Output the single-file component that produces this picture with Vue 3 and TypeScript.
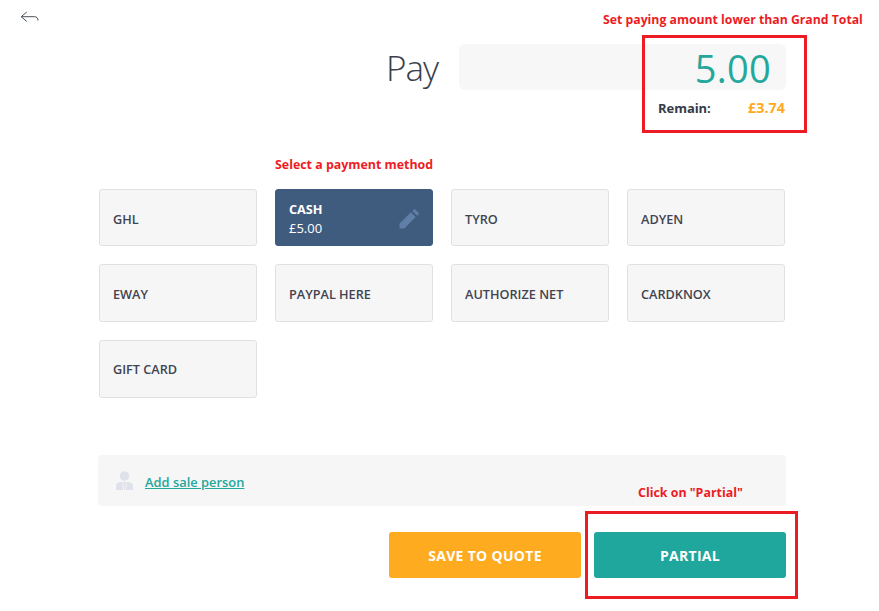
<template>
  <div class="page">
    <button class="back" type="button" aria-label="Back">
      <svg width="19" height="14" viewBox="0 0 19 14" fill="none" stroke="#4a5058" stroke-width="1">
        <path d="M6.8 2 1.2 6.7 6.8 11.5" />
        <path d="M1.2 6.7H14.5C16.6 6.7 18 8 18 10.5" />
      </svg>
    </button>

    <header class="pay-row">
      <h1 class="pay-title">Pay</h1>
      <div class="pay-side">
        <div class="pay-input">5.00</div>
        <div class="remain">
          <span class="remain-label">Remain:</span>
          <span class="remain-value">£3.74</span>
        </div>
      </div>
    </header>

    <section class="methods">
      <button
        v-for="method in methods"
        :key="method.name"
        class="method"
        :class="{ 'method--active': method.amount }"
        type="button"
      >
        <span class="method-name">{{ method.name }}</span>
        <span v-if="method.amount" class="method-amount">{{ method.amount }}</span>
        <svg v-if="method.amount" class="method-edit" width="20" height="20" viewBox="0 0 21 21" fill="#5f7fa6">
          <path d="M0.5 15.5 12.5 3.5 17.5 8.5 5.5 20.5H0.5Z" />
          <path d="M14 2 15.6 0.4C16 0 16.6 0 17 0.4L20.6 4C21 4.4 21 5 20.6 5.4L19 7Z" />
        </svg>
      </button>
    </section>

    <div class="sale-person">
      <svg width="17" height="19" viewBox="0 0 17 19">
        <circle cx="8.5" cy="5" r="4.8" fill="#dfe2ea" />
        <path d="M0 19V14.5C0 12.3 2.6 11 6 11H11C14.4 11 17 12.3 17 14.5V19Z" fill="#dfe2ea" />
        <path d="M6.6 11.5 7.6 19M10.4 11.5 9.4 19" stroke="#f6f6f6" stroke-width="0.8" fill="none" />
      </svg>
      <a class="sale-link" href="#">Add sale person</a>
    </div>

    <footer class="actions">
      <button class="action action--quote" type="button">SAVE TO QUOTE</button>
      <button class="action action--partial" type="button">PARTIAL</button>
    </footer>

    <span class="note note--amount">Set paying amount lower than Grand Total</span>
    <span class="note note--method">Select a payment method</span>
    <span class="note note--partial">Click on "Partial"</span>
    <div class="mark mark--amount"></div>
    <div class="mark mark--partial"></div>
  </div>
</template>

<script setup lang="ts">
type PaymentMethod = {
  name: string;
  amount?: string;
};

const methods: PaymentMethod[] = [
  { name: 'GHL' },
  { name: 'CASH', amount: '£5.00' },
  { name: 'TYRO' },
  { name: 'ADYEN' },
  { name: 'EWAY' },
  { name: 'PAYPAL HERE' },
  { name: 'AUTHORIZE NET' },
  { name: 'CARDKNOX' },
  { name: 'GIFT CARD' },
];
</script>

<style>
html,
body {
  background: #fff;
}
</style>

<style scoped>
.page {
  position: relative;
  width: 879px;
  height: 611px;
  overflow: hidden;
  box-sizing: border-box;
  padding: 44px 93px 0 99px;
  background: #fff;
  font-family: 'Open Sans', 'Liberation Sans', sans-serif;
  color: #3a3f4a;
}

.back {
  position: absolute;
  left: 20px;
  top: 10px;
  padding: 0;
  border: 0;
  background: none;
  line-height: 0;
}

.pay-row {
  display: flex;
  justify-content: flex-end;
  gap: 21px;
  height: 145px;
}

.pay-title {
  margin: 0;
  font-size: 35px;
  font-weight: 300;
  line-height: 48px;
  letter-spacing: -1px;
  color: #39404a;
}

.pay-side {
  width: 327px;
}

.pay-input {
  height: 46px;
  padding-right: 15px;
  border-radius: 6px;
  background: #f7f7f7;
  text-align: right;
  font-size: 38px;
  line-height: 48px;
  letter-spacing: 0.3px;
  color: #25a79b;
}

.remain {
  display: flex;
  justify-content: space-between;
  align-items: center;
  margin-top: 8px;
  padding: 0 1px 0 199px;
  font-size: 13px;
  font-weight: 700;
  line-height: 20px;
}

.remain-label {
  color: #343a46;
  letter-spacing: -0.05px;
}

.remain-value {
  color: #ffa922;
  font-size: 14.4px;
}

.methods {
  display: grid;
  grid-template-columns: repeat(4, 158px);
  grid-template-rows: 57px 58px 58px;
  gap: 18px;
  height: 266px;
}

.method {
  position: relative;
  display: flex;
  flex-direction: column;
  justify-content: center;
  align-items: flex-start;
  padding: 3px 13px 0;
  border: 1px solid #e1e1e1;
  border-radius: 3px;
  background: #f6f6f6;
  font-family: inherit;
  font-size: 12.7px;
  font-weight: 600;
  line-height: 19px;
  color: #3f4450;
}

.method:last-child {
  padding-top: 0;
}

.method--active {
  border-color: #3f5b7e;
  background: #3f5b7e;
  color: #fff;
}

.method--active .method-name {
  font-weight: 700;
}

.method-amount {
  font-size: 13px;
  font-weight: 400;
}

.method-edit {
  position: absolute;
  right: 13px;
  top: 19px;
}

.sale-person {
  display: flex;
  align-items: center;
  gap: 12px;
  width: 688px;
  height: 51px;
  margin-left: -1px;
  padding-left: 18px;
  box-sizing: border-box;
  border-radius: 4px;
  background: #f6f6f6;
}

.sale-link {
  font-size: 12.9px;
  font-weight: 600;
  line-height: 21px;
  padding-top: 4px;
  color: #25a79b;
  text-decoration: underline;
}

.actions {
  display: flex;
  justify-content: flex-end;
  gap: 13px;
  margin-top: 26px;
}

.action {
  width: 192px;
  height: 46px;
  border: 0;
  border-radius: 3px;
  font-family: inherit;
  font-size: 14px;
  font-weight: 700;
  letter-spacing: 0.3px;
  color: #fff;
}

.action--quote {
  background: #ffab20;
}

.action--partial {
  background: #1fa79d;
}

.note {
  position: absolute;
  font-size: 12.25px;
  font-weight: 700;
  line-height: 16px;
  white-space: nowrap;
  color: #ed1c24;
}

.note--amount {
  left: 603px;
  top: 12px;
}

.note--method {
  left: 275px;
  top: 157px;
  font-size: 12.4px;
}

.note--partial {
  left: 638px;
  top: 485px;
  font-size: 12.4px;
}

.mark {
  position: absolute;
  box-sizing: border-box;
  border: 3px solid #ed1c24;
}

.mark--amount {
  left: 642px;
  top: 35px;
  width: 165px;
  height: 98px;
}

.mark--partial {
  left: 585px;
  top: 511px;
  width: 213px;
  height: 88px;
}
</style>
